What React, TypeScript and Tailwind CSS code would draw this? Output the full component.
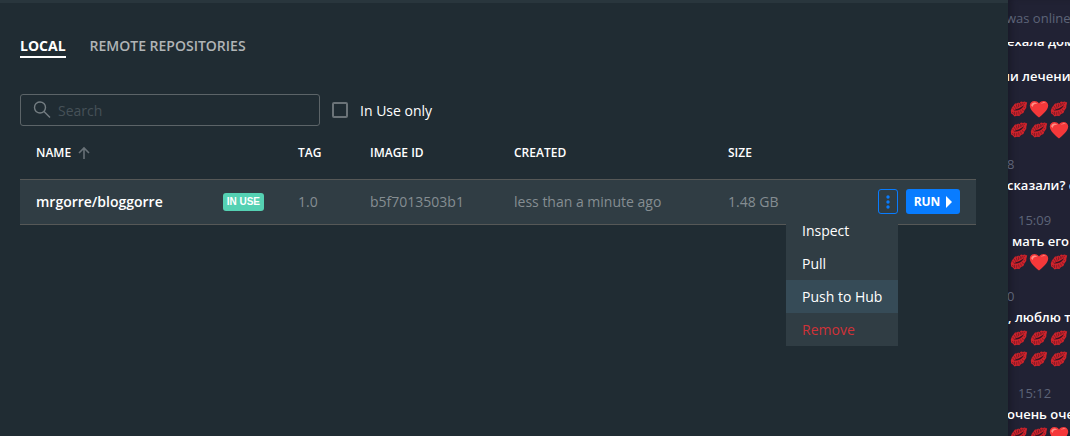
import React from "react";

function Lips() {
  return (
    <svg viewBox="0 0 20 18" className="h-[18px] w-5 shrink-0" role="img" aria-label="kiss">
      <path d="M1.8 10.5 L3 7.2 L4.6 5.6 L6 3.6 L7.8 3.4 L9.2 2.6 L10.4 3.2 L12 1.6 L14 2 L15.6 1.4 L18.2 2.6 L17.4 5.4 L17.2 8 L15.4 10.4 L14.4 13 L12 14 L10.4 16 L7.6 15.8 L5.6 16.4 L3.8 14.6 L2.2 13.6 Z" fill="#cf232b" />
      <path d="M4.6 10.4 C6.2 9.4 7 9.4 8.2 8.8 C9.4 9 10.4 8.2 11.2 7.6 C12.6 7 13.8 5.8 15.2 5 C14 7.4 12.8 8.6 11 9.4 C9 10.4 6.6 10.8 4.6 10.4Z" fill="#3a1524" />
      <path d="M3.4 8 L5 9.6 M5 6 L6.8 8.8 M7.2 4.4 L8.2 7.8 M9.4 3.6 L9.6 7 M11.8 3 L11 6 M13.8 2.6 L12.2 5.6 M16 2.6 L14.2 4.6 M3.4 12 L4.4 13.6 M5.6 11.8 L5.6 15 M7.8 12 L7.6 14.8 M9.6 11.4 L10.2 14.6 M11.6 10.6 L12.4 12.8 M13.4 9.2 L14.4 11 M15 7.2 L16 8.2" stroke="#751824" strokeWidth=".8" fill="none" />
    </svg>
  );
}

function Heart() {
  return (
    <svg viewBox="0 0 20 18" className="h-[18px] w-5 shrink-0" role="img" aria-label="heart">
      <path d="M10 17.6 C7 15 .8 10.5 .8 5.6 C.8 .4 7.2 -.6 10 3.4 C12.8 -.6 19.2 .4 19.2 5.6 C19.2 10.5 13 15 10 17.6Z" fill="#f5383a" />
      <path d="M2.2 5.4 C2.6 2.2 6.4 1.4 8.6 4 C6.4 3.4 4.4 4 3.6 7Z" fill="#ff8f86" />
      <path d="M12 3.8 C13.6 1.8 16 1.8 17.2 3.4 C15.4 2.8 13.6 3.2 12 3.8Z" fill="#ff8f86" />
    </svg>
  );
}

function Emojis({ rows }: { rows: string[] }) {
  return (
    <div className="ml-px flex flex-col gap-px">
      {rows.map((row, r) => (
        <div key={r} className="flex h-5 items-center">
          {row.split("").map((c, i) => (c === "h" ? <Heart key={i} /> : <Lips key={i} />))}
        </div>
      ))}
    </div>
  );
}

function Chat() {
  return (
    <aside className="h-screen w-[62px] shrink-0 overflow-hidden bg-[#212234] font-['Open_Sans','Noto_Sans',sans-serif] text-[13px] leading-[21px] font-semibold whitespace-nowrap text-white shadow-[inset_6px_0_6px_-3px_#191a28]">
      <header className="h-[42px] pt-2 font-normal text-[#5d6478]">
        <p className="-ml-0.5">was online</p>
      </header>
      <div className="h-[394px] overflow-hidden">
        <p className="-mt-[11px] -ml-px">ехала дом</p>
        <p className="mt-3.5 -ml-1.5">ли лечение</p>
        <div className="mt-3">
          <Emojis rows={["khk", "kkh"]} />
        </div>
        <p className="mt-3.5 -ml-px font-normal text-[#5d6478]">8</p>
        <p className="-ml-px">сказали? с</p>
        <p className="mt-3.5 ml-2.5 font-normal text-[#5d6478]">15:09</p>
        <p className="ml-1">мать его</p>
        <Emojis rows={["khk"]} />
        <p className="mt-3.5 -ml-px font-normal text-[#5d6478]">0</p>
        <p>, люблю т</p>
        <Emojis rows={["kkk", "kkk"]} />
        <p className="mt-3.5 ml-2.5 font-normal text-[#5d6478]">15:12</p>
        <p className="-ml-px">очень оче</p>
        <Emojis rows={["kkh"]} />
      </div>
    </aside>
  );
}

function RowMenu() {
  return (
    <div role="menu" className="absolute top-[25px] right-[62px] z-10 w-28 bg-[#303d44] text-sm whitespace-nowrap text-white">
      <button role="menuitem" className="block h-[33px] w-full px-4 text-left hover:bg-[#364b57]">Inspect</button>
      <button role="menuitem" className="block h-[33px] w-full px-4 text-left hover:bg-[#364b57]">Pull</button>
      <button role="menuitem" className="block h-[33px] w-full bg-[#364b57] px-4 text-left">Push to Hub</button>
      <button role="menuitem" className="block h-[33px] w-full px-4 text-left text-[#cf3238]">Remove</button>
    </div>
  );
}

export default function App() {
  return (
    <div className="flex min-h-screen overflow-hidden bg-[#202c33] font-['Open_Sans','Noto_Sans',sans-serif] text-sm text-white">
      <main className="min-w-0 flex-1 border-t-[3px] border-[#29363d] pr-8 pl-5">
        <nav className="flex gap-6 pt-[34px] font-semibold">
          <a href="#local" className="border-b-2 border-white pb-px leading-[18px] font-bold">LOCAL</a>
          <a href="#remote" className="leading-[18px] text-[#b0b4b6]">REMOTE REPOSITORIES</a>
        </nav>
        <div className="mt-9 flex items-center">
          <label className="flex h-8 w-[300px] items-center gap-[7px] rounded-[3px] border border-[#5c6468] pl-3">
            <svg viewBox="0 0 18 18" className="size-[18px]" fill="none" stroke="#747d82" strokeWidth="1.4">
              <circle cx="7" cy="6.5" r="5.5" />
              <path d="M11 10.5 L17 16.5" />
            </svg>
            <input aria-label="Search" placeholder="Search" className="min-w-0 flex-1 bg-transparent pt-px outline-none placeholder:text-[#465158]" />
          </label>
          <label className="ml-3 flex items-center gap-3">
            <input type="checkbox" className="size-4 appearance-none rounded-[2px] border-2 border-[#6b7378]" />
            <span className="pt-0.5">In Use only</span>
          </label>
        </div>
        <table className="mt-1 w-full table-fixed text-left">
          <colgroup>
            <col className="w-[262px]" />
            <col className="w-[72px]" />
            <col className="w-36" />
            <col className="w-[214px]" />
            <col className="w-[110px]" />
            <col />
          </colgroup>
          <thead className="text-xs">
            <tr className="h-[49px] [&>th]:px-4 [&>th]:pb-0.5 [&>th]:font-semibold">
              <th>
                <span className="flex items-center gap-1.5">
                  NAME
                  <svg viewBox="0 0 14 14" className="size-3.5" fill="none" stroke="#687177" strokeWidth="1.6">
                    <path d="M7 13 V2 M2 7 L7 2 L12 7" />
                  </svg>
                </span>
              </th>
              <th>TAG</th>
              <th>IMAGE ID</th>
              <th>CREATED</th>
              <th>SIZE</th>
              <th aria-label="Actions" />
            </tr>
          </thead>
          <tbody>
            <tr className="h-[45px] border-y border-[#565857] bg-[#303d44] text-[#858d92] [&>td]:px-4">
              <td>
                <div className="flex items-center justify-between pr-0.5">
                  <span className="font-semibold text-white">mrgorre/bloggorre</span>
                  <span className="h-[18px] rounded-[3px] bg-[#55d1b3] px-1 font-['Liberation_Sans',sans-serif] text-[10px] leading-[18px] font-bold text-white">IN USE</span>
                </div>
              </td>
              <td>1.0</td>
              <td>b5f7013503b1</td>
              <td>less than a minute ago</td>
              <td>1.48 GB</td>
              <td>
                <div className="relative flex justify-end gap-2">
                  <button aria-label="More actions" className="flex h-[25px] w-5 items-center justify-center rounded-[3px] border border-[#087cff]">
                    <svg viewBox="0 0 4 14" className="h-3.5 w-1" fill="#087cff">
                      <circle cx="2" cy="2" r="1.7" />
                      <circle cx="2" cy="7" r="1.7" />
                      <circle cx="2" cy="12" r="1.7" />
                    </svg>
                  </button>
                  <button className="flex h-[25px] w-[54px] items-center justify-center gap-1.5 rounded-[3px] bg-[#087cff] text-xs font-bold text-white">
                    RUN
                    <svg viewBox="0 0 6 12" className="h-3 w-1.5" fill="#fff"><path d="M0 0 L6 6 L0 12Z" /></svg>
                  </button>
                  <RowMenu />
                </div>
              </td>
            </tr>
          </tbody>
        </table>
      </main>
      <Chat />
    </div>
  );
}
